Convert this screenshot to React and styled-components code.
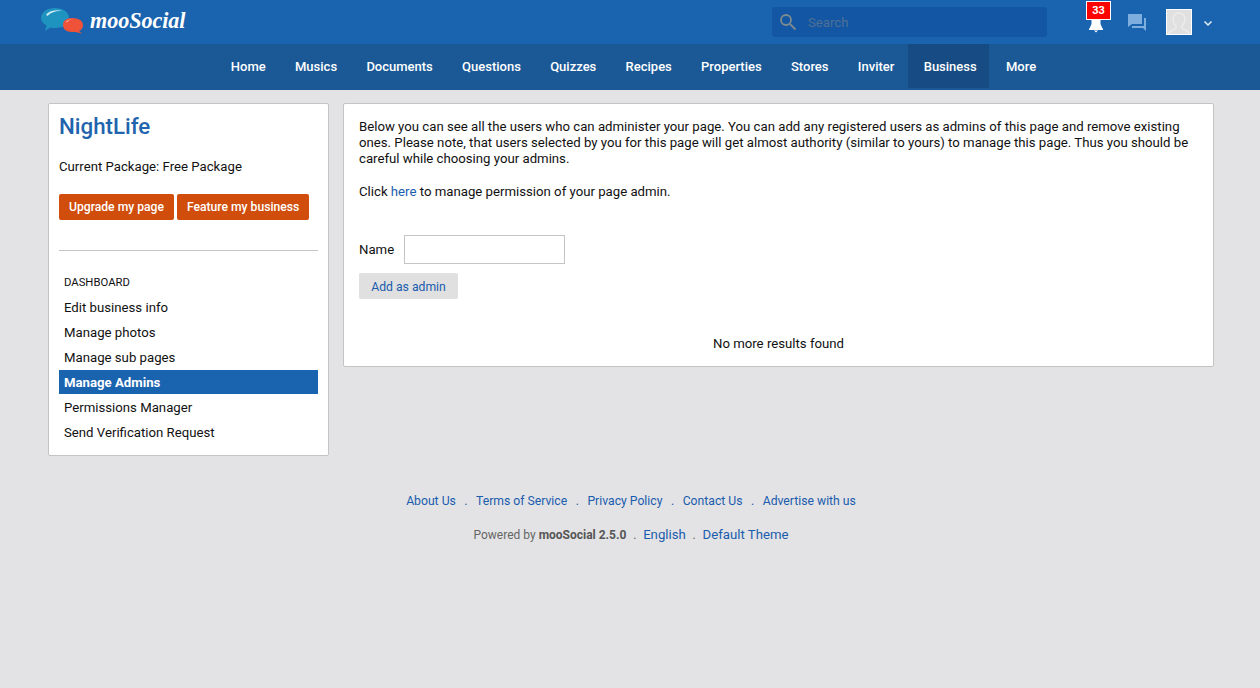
import React from "react";
import styled, { createGlobalStyle } from "styled-components";

const Global = createGlobalStyle`
  html, body { margin: 0; padding: 0; background: #e3e3e5; }
  body { font-family: Roboto, "Liberation Sans", sans-serif; font-size: 13.2px; color: #000; }
  * { box-sizing: border-box; }
  svg { display: block; }
`;
const Page = styled.div`height: 688px; overflow: hidden; display: flex; flex-direction: column;`;
const Header = styled.header`
  height: 44px; background: #1a63ae; display: flex; align-items: flex-start; padding-left: 41px;
`;
const Logo = styled.div`display: flex; align-items: center; height: 44px; margin-top: -1px; width: 731px;`;
const LogoText = styled.span`
  font-family: "Liberation Serif", serif; font-style: italic; font-weight: 700; font-size: 22.2px;
  color: #fff; margin-left: 5px; letter-spacing: -0.1px;
`;
const Search = styled.div`
  width: 275px; height: 30px; margin-top: 7px; background: #1357a4; border-radius: 3px;
  display: flex; align-items: center; padding-left: 7px; gap: 11px;
`;
const SearchText = styled.span`color: #4f6f96; font-size: 13.2px;`;
const Tools = styled.div`display: flex; align-items: flex-start; margin-left: 39px;`;
const Bell = styled.div`position: relative; width: 41px; height: 44px; padding: 17px 0 0 2px;`;
const Badge = styled.span`
  position: absolute; top: 1px; left: 0; width: 25px; height: 19px; background: #f00;
  border: 1px solid #fff; color: #fff; font-size: 11px; font-weight: 700; text-align: center; line-height: 17px;
`;
const ChatBox = styled.div`width: 39px; padding: 13px 0 0 0;`;
const Avatar = styled.div`
  width: 26px; height: 26px; margin-top: 9px; background: #e0e0e0; border: 1px solid #fff; overflow: hidden;
`;
const Chevron = styled.div`margin: 20px 0 0 11px; width: 10px;`;
const Nav = styled.nav`
  height: 46px; background: #1a5996; display: flex; justify-content: center; padding-left: 7px; align-items: flex-start;
`;
const NavItem = styled.a`
  height: 44px; padding: ${p => p.$active ? "0 12px 0 16px" : "0 14.65px"};
  margin: ${p => p.$active ? "0 2.65px 0 -1.35px" : "0"};
  line-height: 45px; color: #fff; font-weight: 500; font-size: 13px;
  background: ${p => p.$active ? "#164c83" : "transparent"};
`;
const Content = styled.main`
  display: flex; align-items: flex-start; gap: 14px; padding: 13px 46px 0 48px;
`;
const Card = styled.section`
  background: #fff; border: 1px solid #c4c4c4; border-radius: 2px;
`;
const Side = styled(Card)`width: 281px; height: 353px; padding: 0 10px;`;
const Title = styled.h1`
  margin: 6px 0 0; font-size: 22.3px; line-height: 32px; font-weight: 500; color: #1f64ad;
`;
const Pkg = styled.div`margin-top: 16px; line-height: 18px; color: #111;`;
const Actions = styled.div`display: flex; gap: 3px; margin-top: 18px;`;
const OrangeBtn = styled.a`
  height: 26px; padding: 0 10px; line-height: 26px; background: #d04d0c; color: #fff; white-space: nowrap;
  font-size: 12.15px; font-weight: 500; border-radius: 2px;
`;
const Rule = styled.hr`margin: 30px 0 0; border: 0; border-top: 1px solid #c4c4c4;`;
const MenuHead = styled.div`margin: 24px 0 0; padding: 1px 0 0 5px; font-size: 11.3px; line-height: 14px; height: 14px; color: #111;`;
const Menu = styled.div`display: flex; flex-direction: column; gap: 1px; margin-top: 6px;`;
const MenuItem = styled.a`
  height: 24px; line-height: 24px; padding: 1px 0 0 5px;
  color: ${p => p.$active ? "#fff" : "#111"};
  background: ${p => p.$active ? "#1a63ae" : "transparent"};
  font-weight: ${p => p.$active ? 700 : 400};
`;
const MainCard = styled(Card)`width: 871px; height: 264px; padding: 15px 15px 0;`;
const Para = styled.p`margin: 0; line-height: 16px; color: #111;`;
const ClickPara = styled(Para)`margin-top: 17px;`;
const Link = styled.a`color: #1a5cad;`;
const FormRow = styled.div`display: flex; align-items: center; gap: 10px; margin-top: 35px;`;
const Input = styled.div`width: 161px; height: 29px; border: 1px solid #c4c4c4; background: #fff;`;
const AddBtn = styled.a`
  display: block; width: 99px; height: 26px; margin-top: 9px; padding-top: 1px; border-radius: 2px; background: #e0e0e0;
  color: #1a5cad; text-align: center; line-height: 26px; font-size: 12.2px;
`;
const NoMore = styled.div`margin-top: 37px; text-align: center; line-height: 16px; color: #111;`;
const Footer = styled.footer`
  margin-top: 37px; padding-left: 2px; display: flex; flex-direction: column; align-items: center;
`;
const FootLinks = styled.div`display: flex; gap: 8.5px; font-size: 12.2px; line-height: 16px; color: #1a5cad;`;
const FootBottom = styled.div`display: flex; gap: 6.8px; margin-top: 18px; font-size: 12px; line-height: 16px; color: #666;`;
const Strong = styled.b`color: #555; font-weight: 700;`;
const FootLink = styled.span`color: #1a5cad; font-size: 13.2px;`;

const navs = ["Home","Musics","Documents","Questions","Quizzes","Recipes","Properties","Stores","Inviter","Business","More"];
const menu = ["Edit business info","Manage photos","Manage sub pages","Manage Admins","Permissions Manager","Send Verification Request"];
const foot = ["About Us",".","Terms of Service",".","Privacy Policy",".","Contact Us",".","Advertise with us"];

export default function App() {
  return (
    <Page>
      <Global />
      <Header>
        <Logo>
          <svg width="44" height="28" viewBox="0 0 44 28">
            <path d="M0 11C0 5 6 1 14 1c8 0 14 4 14 10 0 6-6 10-14 10-1.500 0-3 0-4.500-.5L4 24l1.500-5.500C2 16.500 0 14 0 11z" fill="#1f93bf"/>
            <path d="M5 7.500C8 4 14 2.500 21 3.500 15 4 10 5 6.500 9z" fill="#cdeaf5"/>
            <path d="M22 18c0-4 3-7 9-7 7 0 11 3 11 7 0 3-1.500 5-4 6l3 2.500-6.500-1.500H31c-6 0-9-3-9-7z" fill="#ee5339"/>
            <path d="M25 15c1.500-2 4-2.800 7-2.800-3 .6-5 1.300-6 3.300z" fill="#fbc5b8"/>
          </svg>
          <LogoText>mooSocial</LogoText>
        </Logo>
        <Search>
          <svg width="18" height="18" viewBox="0 0 18 18" fill="none" stroke="#7d8a8f" strokeWidth="1.800"><circle cx="7" cy="7" r="5"/><path d="M11 11l5.500 5.500"/></svg>
          <SearchText>Search</SearchText>
        </Search>
        <Tools>
          <Bell>
            <svg width="16" height="16" viewBox="0 0 16 16" fill="#fff"><path d="M3.500 0h9v7l2 4.500h-13l2-4.500zM1 11.500h14v1.500H1zM6 13.500h4L8 15.500z"/></svg>
            <Badge>33</Badge>
          </Bell>
          <ChatBox>
            <svg width="20" height="19" viewBox="0 0 20 19" fill="#7eaede"><path d="M1 1h14v10H5l-4 3z"/><path d="M17 5h2v13l-3-3H5v-2h12z"/></svg>
          </ChatBox>
          <Avatar>
            <svg width="24" height="24" viewBox="0 0 24 24" fill="none" stroke="#eeeeee" strokeWidth="1.300"><path d="M2 24v-1c0-2 6-3 7-5v-2c-2-2-3-4-3-7 0-4 3-6 6-6s6 2 6 6c0 3-1 5-3 7v2c1 2 7 3 7 5v1"/></svg>
          </Avatar>
          <Chevron>
            <svg width="10" height="7" viewBox="0 0 10 7" fill="none" stroke="#e8eef6" strokeWidth="1.500"><path d="M1.500 1.500L5 5l3.500-3.500"/></svg>
          </Chevron>
        </Tools>
      </Header>
      <Nav>
        {navs.map(n => <NavItem key={n} $active={n === "Business"}>{n}</NavItem>)}
      </Nav>
      <Content>
        <Side>
          <Title>NightLife</Title>
          <Pkg>Current Package: Free Package</Pkg>
          <Actions>
            <OrangeBtn>Upgrade my page</OrangeBtn>
            <OrangeBtn>Feature my business</OrangeBtn>
          </Actions>
          <Rule />
          <MenuHead>DASHBOARD</MenuHead>
          <Menu>
            {menu.map(m => <MenuItem key={m} $active={m === "Manage Admins"}>{m}</MenuItem>)}
          </Menu>
        </Side>
        <MainCard>
          <Para>Below you can see all the users who can administer your page. You can add any registered users as admins of this page and remove existing ones. Please note, that users selected by you for this page will get almost authority (similar to yours) to manage this page. Thus you should be careful while choosing your admins.</Para>
          <ClickPara>Click <Link>here</Link> to manage permission of your page admin.</ClickPara>
          <FormRow>
            <Para>Name</Para>
            <Input />
          </FormRow>
          <AddBtn>Add as admin</AddBtn>
          <NoMore>No more results found</NoMore>
        </MainCard>
      </Content>
      <Footer>
        <FootLinks>{foot.map((f, i) => <span key={i}>{f}</span>)}</FootLinks>
        <FootBottom>
          <span>Powered by <Strong>mooSocial 2.5.0</Strong></span>
          <span>.</span>
          <FootLink>English</FootLink>
          <span>.</span>
          <FootLink>Default Theme</FootLink>
        </FootBottom>
      </Footer>
    </Page>
  );
}
